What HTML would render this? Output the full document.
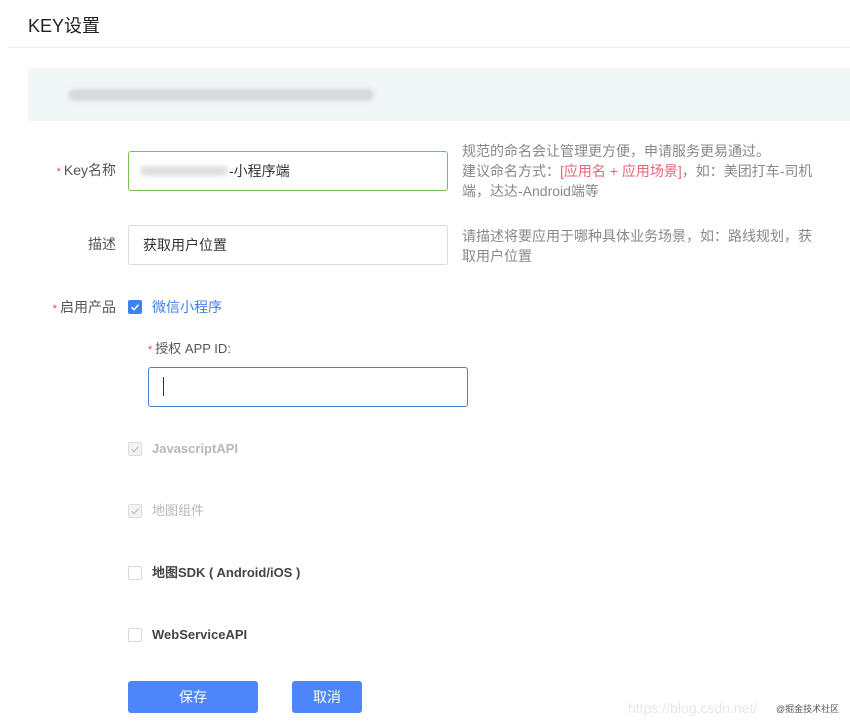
<!DOCTYPE html>
<html><head><meta charset="utf-8"><style>
*{margin:0;padding:0;box-sizing:border-box}
body{width:850px;height:727px;background:#fff;position:relative;overflow:hidden;font-family:"Liberation Sans","Noto Sans CJK SC",sans-serif;color:#333;font-size:14px}
.a{position:absolute;white-space:nowrap}
.lbl{position:absolute;right:734px;font-size:14px;color:#555;line-height:20px}
.star{color:#e5484d;font-size:11px;margin-right:3px}
.inp{position:absolute;border:1px solid #dcdcdc;border-radius:3px;background:#fff}
.help{position:absolute;left:462px;font-size:14px;color:#888;line-height:20px;width:365px}
.cb{position:absolute;left:128px;width:14px;height:14px;border:1px solid #d8d8d8;border-radius:2px;background:#fff}
.cbd{background:#f3f3f3;border-color:#ddd}
.opt{position:absolute;left:152px;font-size:13px;font-weight:bold;line-height:18px}
.btn{position:absolute;top:681px;height:32px;background:#4d86fb;color:#fff;border-radius:3px;text-align:center;line-height:32px;font-size:14px}
</style></head><body>
<div class="a" style="left:28px;top:12px;font-size:18px;color:#222">KEY设置</div>
<div class="a" style="left:8px;right:0;top:47px;height:1px;background:#eee"></div>
<div class="a" style="left:28px;right:0;top:68px;height:53px;background:#f1f6f6"></div>
<div class="a" style="left:68px;top:89px;width:306px;height:12px;background:#d6d9d9;border-radius:6px;filter:blur(2px)"></div>

<div class="lbl" style="top:160px"><span class="star">*</span>Key名称</div>
<div class="inp" style="left:128px;top:151px;width:320px;height:40px;border-color:#7cbf55"></div>
<div class="a" style="left:140px;top:166px;width:88px;height:10px;background:#e0e0e0;border-radius:5px;filter:blur(2px)"></div>
<div class="a" style="left:229px;top:161px;font-size:14px;color:#333">-小程序端</div>
<div class="help" style="top:141px">规范的命名会让管理更方便，申请服务更易通过。<br>建议命名方式：<span style="color:#e5657a">[应用名 + 应用场景]</span>，如：美团打车-司机<br>端，达达-Android端等</div>

<div class="lbl" style="top:234px">描述</div>
<div class="inp" style="left:128px;top:225px;width:320px;height:40px"></div>
<div class="a" style="left:143px;top:235px;font-size:14px;color:#333">获取用户位置</div>
<div class="help" style="top:226px">请描述将要应用于哪种具体业务场景，如：路线规划，获<br>取用户位置</div>

<div class="lbl" style="top:297px"><span class="star">*</span>启用产品</div>
<div class="cb" style="top:300px;background:#4080f0;border-color:#4080f0"><svg width="12" height="12" style="position:absolute;left:0;top:0"><path d="M2.5 6.2l2.5 2.5 4.5-5" stroke="#fff" stroke-width="1.5" fill="none"/></svg></div>
<div class="a" style="left:152px;top:297px;font-size:14px;color:#3f7fea">微信小程序</div>

<div class="a" style="left:148px;top:338px;font-size:13px;color:#555"><span class="star">*</span>授权 APP ID:</div>
<div class="inp" style="left:148px;top:367px;width:320px;height:40px;border-color:#4a80d8"></div>
<div class="a" style="left:163px;top:377px;width:1px;height:19px;background:#333"></div>

<div class="cb cbd" style="top:442px"><svg width="12" height="12" style="position:absolute;left:0;top:0"><path d="M2.5 6.2l2.5 2.5 4.5-5" stroke="#c0c0c0" stroke-width="1.2" fill="none"/></svg></div>
<div class="opt" style="top:440px;color:#b8b8b8">JavascriptAPI</div>
<div class="cb cbd" style="top:504px"><svg width="12" height="12" style="position:absolute;left:0;top:0"><path d="M2.5 6.2l2.5 2.5 4.5-5" stroke="#c0c0c0" stroke-width="1.2" fill="none"/></svg></div>
<div class="opt" style="top:502px;color:#b8b8b8;font-weight:normal">地图组件</div>
<div class="cb" style="top:566px"></div>
<div class="opt" style="top:564px;color:#444">地图SDK ( Android/iOS )</div>
<div class="cb" style="top:628px"></div>
<div class="opt" style="top:626px;color:#444">WebServiceAPI</div>

<div class="btn" style="left:128px;width:130px">保存</div>
<div class="btn" style="left:292px;width:70px">取消</div>
<div class="a" style="left:628px;top:700px;font-size:14px;color:#e6e6e6">https://blog.csdn.net/</div>
<div class="a" style="left:776px;top:702px;font-size:9px;color:#555">@掘金技术社区</div>
</body></html>
